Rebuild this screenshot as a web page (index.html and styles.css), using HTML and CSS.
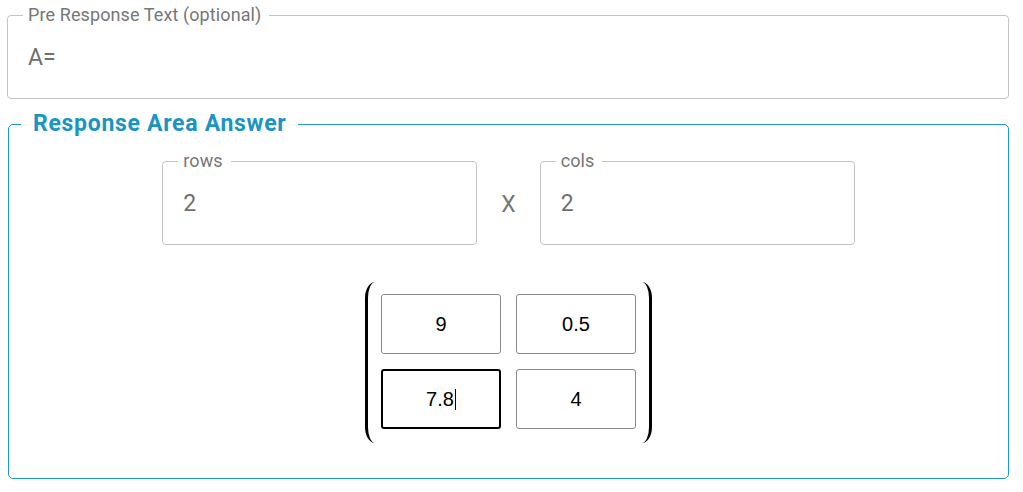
FILE: index.html
```html
<!DOCTYPE html>
<html lang="en">
<head>
<meta charset="utf-8">
<title>Response Area</title>
<link rel="stylesheet" href="styles.css">
</head>
<body>
<div class="page">
  <fieldset class="field">
    <legend class="field-label">Pre Response Text (optional)</legend>
    <div class="field-value">A=</div>
  </fieldset>

  <fieldset class="answer">
    <legend class="answer-title">Response Area Answer</legend>
    <div class="dims">
      <fieldset class="field dim">
        <legend class="field-label">rows</legend>
        <div class="field-value">2</div>
      </fieldset>
      <span class="times">X</span>
      <fieldset class="field dim">
        <legend class="field-label">cols</legend>
        <div class="field-value">2</div>
      </fieldset>
    </div>
    <div class="matrix-wrap">
      <div class="matrix">
        <div class="cell">9</div>
        <div class="cell">0.5</div>
        <div class="cell cell-focus">7.8<span class="caret"></span></div>
        <div class="cell">4</div>
      </div>
    </div>
  </fieldset>
</div>
</body>
</html>
```

FILE: styles.css
```css
html, body {
  margin: 0;
  padding: 0;
  background: #ffffff;
}

body {
  font-family: Roboto, "Noto Sans", "Liberation Sans", sans-serif;
}

.page {
  width: 1002px;
  padding: 5px 0 0 7px;
}

.field {
  box-sizing: border-box;
  margin: 0;
  min-width: 0;
  border: 1px solid #c4c4c4;
  border-radius: 4px;
  padding: 21px 14px 28px 15px;
}

.field-label {
  padding: 0 8px 0 5px;
  font-size: 18px;
  letter-spacing: 0.1px;
  line-height: 20px;
  color: #777777;
}

.field-value {
  padding-left: 5px;
  font-size: 23px;
  line-height: 24px;
  color: #707070;
}

.answer {
  box-sizing: border-box;
  margin: 13px 0 0 1px;
  min-width: 0;
  border: 1px solid #1e98c3;
  border-radius: 5px;
  padding: 15px 12px 35px 12px;
}

.answer-title {
  padding: 0 12px;
  font-size: 23px;
  font-weight: 700;
  letter-spacing: 0.7px;
  line-height: 24px;
  color: #1a95c2;
}

.dims {
  display: flex;
  justify-content: center;
  align-items: center;
  gap: 24px;
}

.dim {
  width: 315px;
  flex: none;
}

.times {
  margin-top: 14px;
  font-size: 23px;
  line-height: 24px;
  color: #777777;
}

.matrix-wrap {
  display: flex;
  justify-content: center;
  margin-top: 37px;
}

.matrix {
  display: grid;
  grid-template-columns: 120px 120px;
  grid-auto-rows: 60px;
  gap: 15px;
  padding: 12px 13px 14px;
  border-left: 3px solid #000000;
  border-right: 3px solid #000000;
  border-radius: 10px / 16px;
}

.cell {
  box-sizing: border-box;
  display: flex;
  align-items: center;
  justify-content: center;
  border: 1px solid #8a8a8a;
  border-radius: 3px;
  font-family: "Liberation Sans", Arial, sans-serif;
  font-size: 20px;
  color: #000000;
}

.cell-focus {
  border: 2px solid #000000;
}

.caret {
  display: block;
  width: 1px;
  height: 21px;
  margin-left: 1px;
  background: #000000;
}
```
